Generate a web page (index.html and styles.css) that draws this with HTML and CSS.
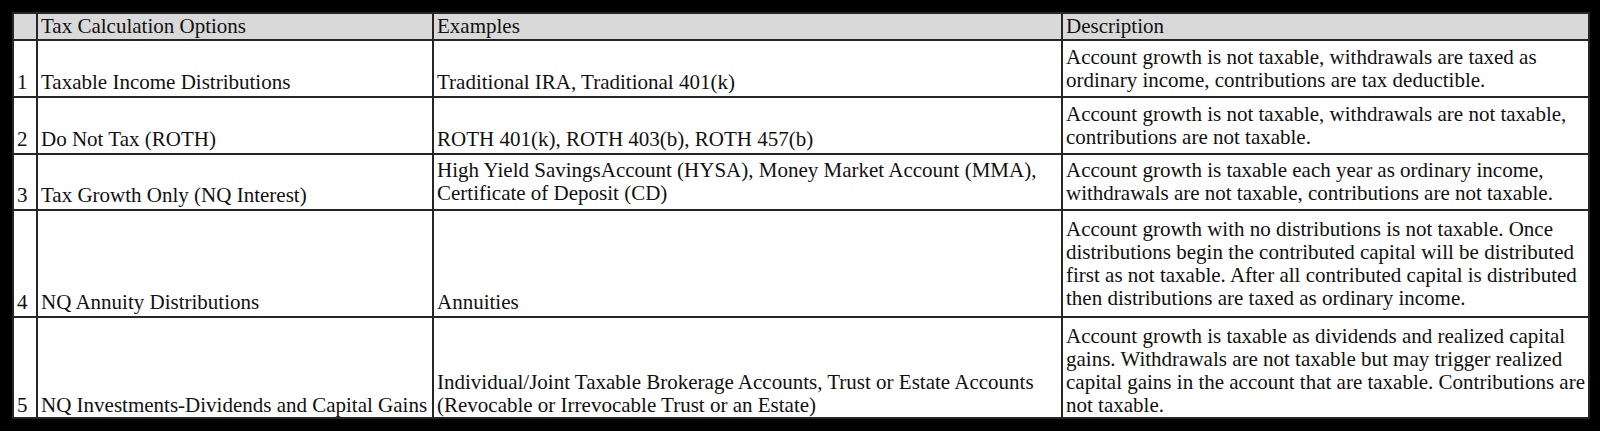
FILE: index.html
```html
<!DOCTYPE html>
<html lang="en">
<head>
<meta charset="utf-8">
<title>Tax Calculation Options</title>
<link rel="stylesheet" href="styles.css">
</head>
<body>
<table class="tax-table">
  <colgroup>
    <col class="c-num">
    <col class="c-opt">
    <col class="c-ex">
    <col class="c-desc">
  </colgroup>
  <thead>
    <tr class="r-head">
      <th class="num"></th>
      <th>Tax Calculation Options</th>
      <th>Examples</th>
      <th>Description</th>
    </tr>
  </thead>
  <tbody>
    <tr class="r-1">
      <td class="num">1</td>
      <td>Taxable Income Distributions</td>
      <td>Traditional IRA, Traditional 401(k)</td>
      <td class="desc">Account growth is not taxable, withdrawals are taxed as ordinary income, contributions are tax deductible.</td>
    </tr>
    <tr class="r-2">
      <td class="num">2</td>
      <td>Do Not Tax (ROTH)</td>
      <td>ROTH 401(k), ROTH 403(b), ROTH 457(b)</td>
      <td class="desc">Account growth is not taxable, withdrawals are not taxable, contributions are not taxable.</td>
    </tr>
    <tr class="r-3">
      <td class="num">3</td>
      <td>Tax Growth Only (NQ Interest)</td>
      <td class="mid">High Yield SavingsAccount (HYSA), Money Market Account (MMA), Certificate of Deposit (CD)</td>
      <td class="desc">Account growth is taxable each year as ordinary income, withdrawals are not taxable, contributions are not taxable.</td>
    </tr>
    <tr class="r-4">
      <td class="num">4</td>
      <td>NQ Annuity Distributions</td>
      <td>Annuities</td>
      <td class="desc">Account growth with no distributions is not taxable. Once distributions begin the contributed capital will be distributed first as not taxable. After all contributed capital is distributed then distributions are taxed as ordinary income.</td>
    </tr>
    <tr class="r-5">
      <td class="num">5</td>
      <td>NQ Investments-Dividends and Capital Gains</td>
      <td>Individual/Joint Taxable Brokerage Accounts, Trust or Estate Accounts (Revocable or Irrevocable Trust or an Estate)</td>
      <td>Account growth is taxable as dividends and realized capital gains. Withdrawals are not taxable but may trigger realized capital gains in the account that are taxable. Contributions are not taxable.</td>
    </tr>
  </tbody>
</table>
</body>
</html>
```
FILE: styles.css
```css
html, body {
  margin: 0;
  padding: 0;
  background: #000;
}
body {
  padding: 12px;
  font-family: "Liberation Serif", "Times New Roman", serif;
  font-size: 21px;
  color: #111;
}
.tax-table {
  border-collapse: collapse;
  table-layout: fixed;
  width: 1576px;
  background: #fff;
}
.c-num { width: 24px; }
.c-opt { width: 396px; }
.c-ex { width: 629px; }
.c-desc { width: 527px; }
.tax-table th,
.tax-table td {
  border: 2px solid #262626;
  padding: 0 1px 2px 3px;
  text-align: left;
  font-weight: normal;
  vertical-align: bottom;
  line-height: 23px;
}
.tax-table th {
  background: #d9d9d9;
  padding-bottom: 1px;
}
.tax-table .num {
  padding-left: 3px;
  padding-right: 1px;
}
.tax-table .desc,
.tax-table .mid {
  vertical-align: middle;
  padding-bottom: 0;
}
.r-5 td { padding-bottom: 0; }
.r-head th { height: 24px; }
.r-1 td { height: 53px; }
.r-2 td { height: 53px; }
.r-3 td { height: 52px; }
.r-4 td { height: 103px; }
.r-5 td { height: 99px; }
```
